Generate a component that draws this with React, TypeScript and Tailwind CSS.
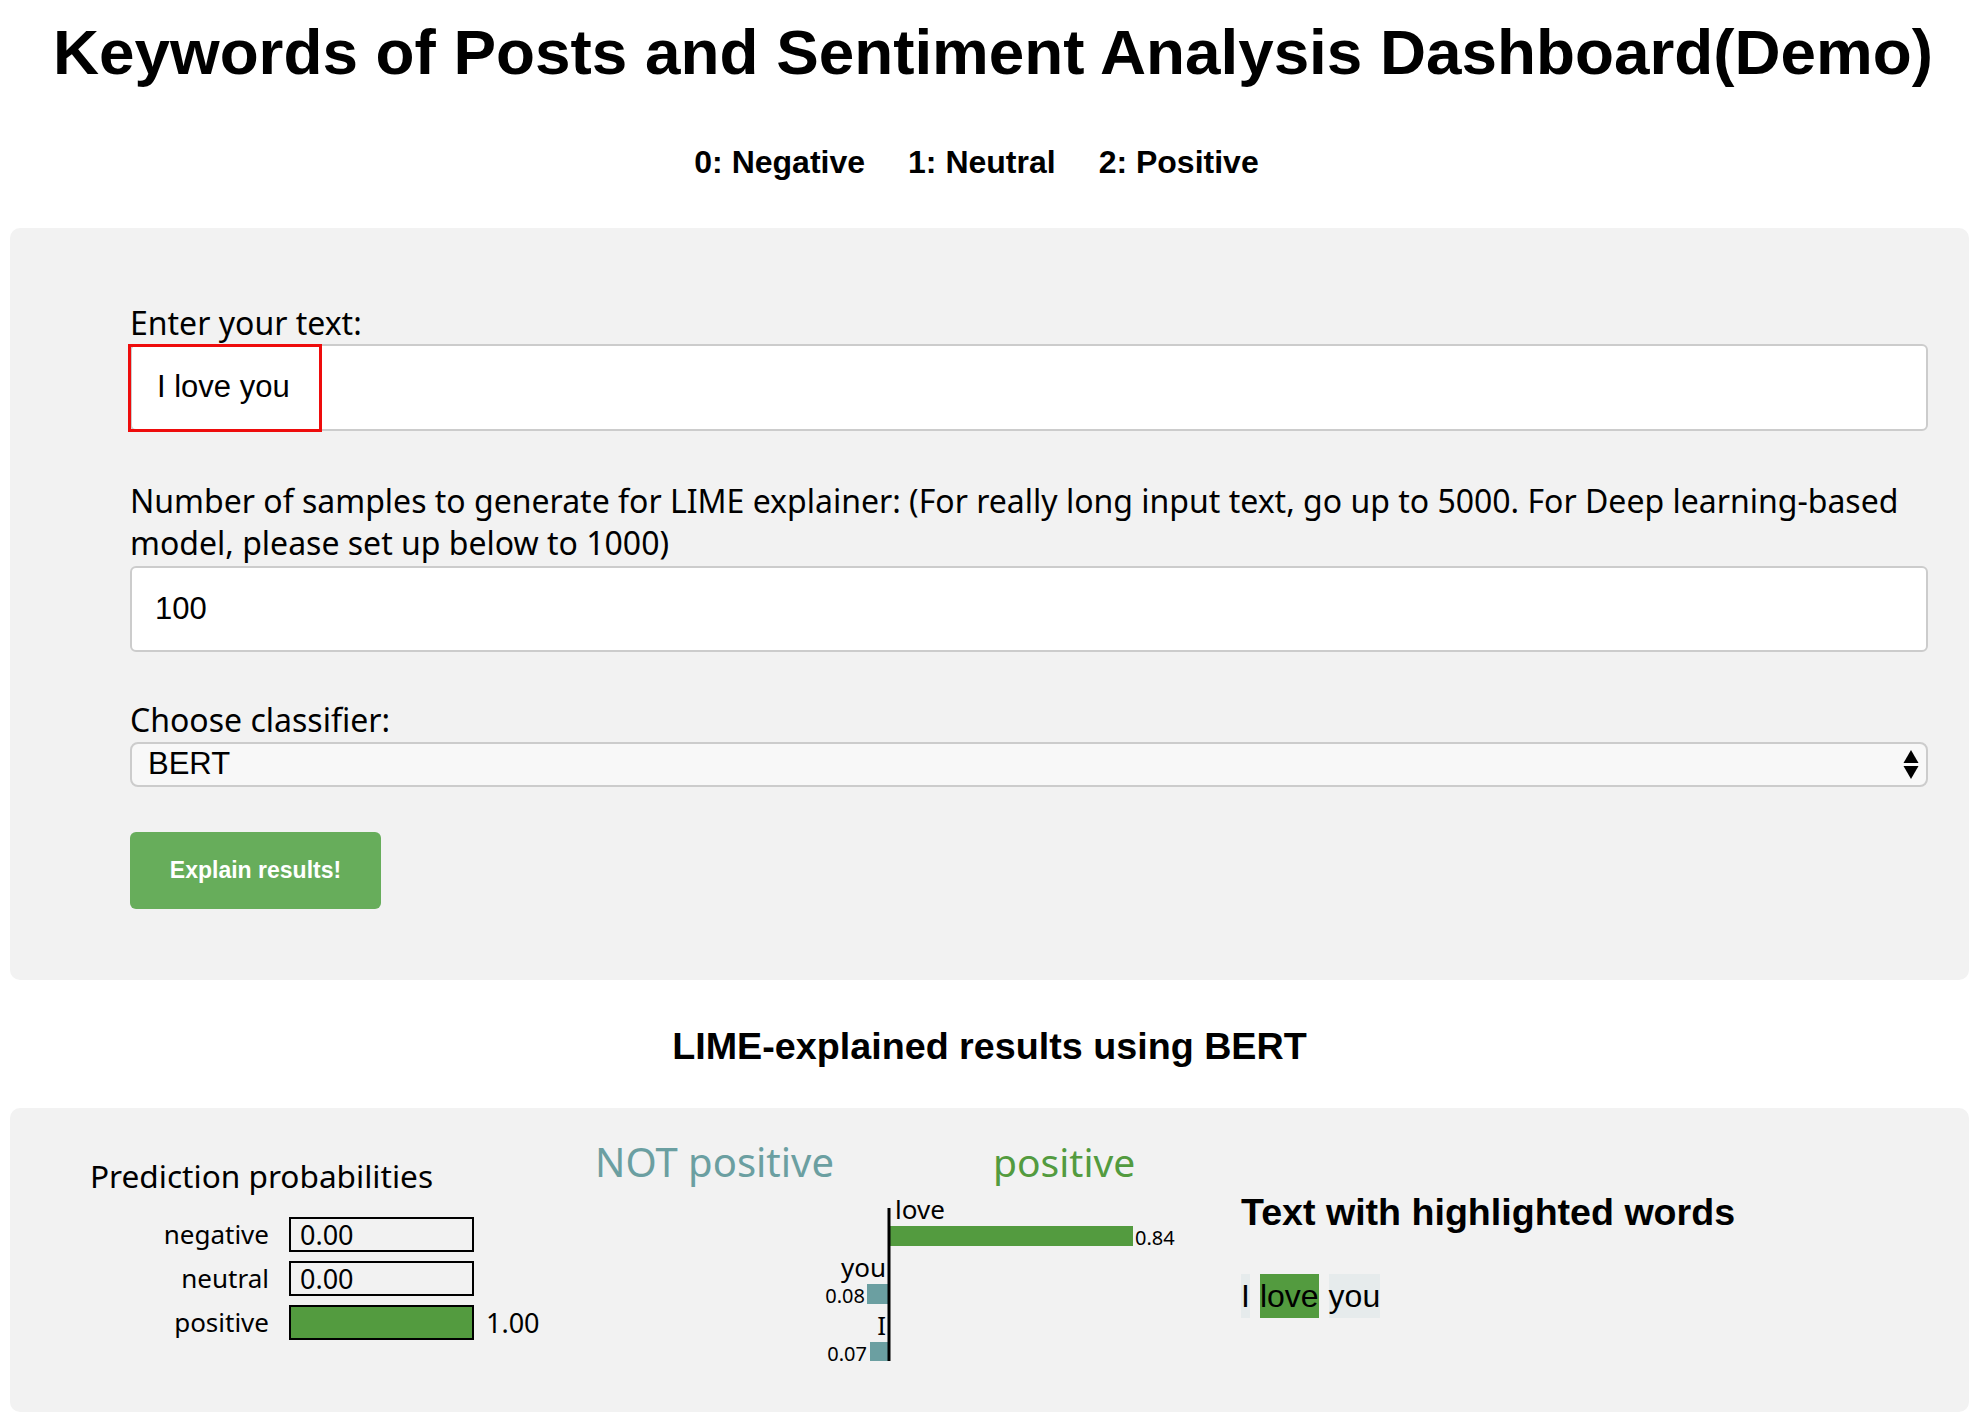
import React from 'react'

const GREEN = '#539b3f'
const TEAL = '#6b9fa1'

function SelectArrows() {
  return (
    <svg width="16" height="29" viewBox="0 0 16 29" className="shrink-0">
      <path d="M8 0 L15.5 13 H0.5 Z" fill="#000" />
      <path d="M0.5 16 H15.5 L8 29 Z" fill="#000" />
    </svg>
  )
}

function ProbRow({ label, value, filled }: { label: string; value: string; filled: boolean }) {
  return (
    <div className="flex h-[35px] items-center">
      <span className="w-[199px] pr-[20px] text-right text-[26px] leading-[35px]">{label}</span>
      <div className="relative h-[35px] w-[185px] border-2 border-black">
        {filled ? (
          <div className="absolute inset-0 bg-[#539b3f]" />
        ) : (
          <span className="absolute left-[9px] top-0 text-[27px] leading-[31px]">{value}</span>
        )}
      </div>
      {filled && <span className="ml-[12px] text-[27px] leading-[35px]">{value}</span>}
    </div>
  )
}

function FeatureChart() {
  const font = { fontFamily: "'Noto Sans', sans-serif" }
  return (
    <svg width="640" height="260" viewBox="0 0 640 260" className="shrink-0" style={font}>
      <text x="35" y="55" fontSize="40" fill={TEAL}>NOT positive</text>
      <text x="433" y="55" fontSize="39" fill={GREEN}>positive</text>

      <text x="335" y="97" fontSize="26" fill="#000">love</text>
      <rect x="330" y="104" width="243" height="20" fill={GREEN} />
      <text x="575" y="123" fontSize="20" fill="#000">0.84</text>

      <text x="326" y="155" fontSize="26" fill="#000" textAnchor="end">you</text>
      <rect x="307" y="162" width="22" height="20" fill={TEAL} />
      <text x="305" y="181" fontSize="20" fill="#000" textAnchor="end">0.08</text>

      <text x="326" y="213" fontSize="26" fill="#000" textAnchor="end">I</text>
      <rect x="310" y="220" width="19" height="19" fill={TEAL} />
      <text x="307" y="239" fontSize="20" fill="#000" textAnchor="end">0.07</text>

      <line x1="329" y1="86" x2="329" y2="239" stroke="#000" strokeWidth="3" />
    </svg>
  )
}

export default function App() {
  return (
    <div className="min-h-screen bg-white text-black font-['Noto_Sans',sans-serif]">
      <h1 className="pt-[14px] text-center font-['Liberation_Sans',Arial,sans-serif] text-[63.8px] font-bold leading-[76px]">
        Keywords of Posts and Sentiment Analysis Dashboard(Demo)
      </h1>

      <div className="mt-[53px] flex justify-center gap-[43px] pr-[33px] font-['Liberation_Sans',Arial,sans-serif] text-[32px] font-bold leading-[38px]">
        <span>0: Negative</span>
        <span>1: Neutral</span>
        <span>2: Positive</span>
      </div>

      {/* Input form */}
      <div className="ml-[10px] mr-[17px] mt-[47px] rounded-[10px] bg-[#f2f2f2] pb-[71px] pl-[120px] pr-[41px] pt-[74px]">
        <label className="block text-[32px] leading-[41px]">Enter your text:</label>
        <div className="relative mt-[1px]">
          <div className="flex h-[87px] items-center rounded-md border-2 border-[#cccccc] bg-white pl-[25px] font-['Liberation_Sans',Arial,sans-serif] text-[31px]">
            I love you
          </div>
          <div className="absolute left-[-2px] top-0 h-[88px] w-[194px] border-[3px] border-[#ee0c0c]" />
        </div>

        <label className="mt-[49px] block text-[32px] leading-[42px]">
          Number of samples to generate for LIME explainer: (For really long input text, go up to 5000. For Deep learning‑based model, please set up below to 1000)
        </label>
        <div className="mt-[2px] flex h-[86px] items-center rounded-md border-2 border-[#cccccc] bg-white pl-[23px] font-['Liberation_Sans',Arial,sans-serif] text-[31px]">
          100
        </div>

        <label className="mt-[47px] block text-[32px] leading-[41px]">Choose classifier:</label>
        <div className="mt-[2px] flex h-[45px] items-center justify-between rounded-lg border-2 border-[#cccccc] bg-[#f8f8f8] pl-[16px] pr-[7px] font-['Liberation_Sans',Arial,sans-serif] text-[31px]">
          <span>BERT</span>
          <SelectArrows />
        </div>

        <button className="mt-[45px] flex h-[77px] w-[251px] items-center justify-center rounded-md bg-[#67ad5b] font-['Liberation_Sans',Arial,sans-serif] text-[23px] font-bold text-white">
          Explain results!
        </button>
      </div>

      <h3 className="mt-[44px] pr-[7px] text-center font-['Liberation_Sans',Arial,sans-serif] text-[37.7px] font-bold leading-[44px]">
        LIME‑explained results using BERT
      </h3>

      {/* LIME output */}
      <div className="ml-[10px] mr-[17px] mt-[40px] flex h-[304px] items-start rounded-[10px] bg-[#f2f2f2]">
        <div className="w-[550px] shrink-0 pl-[80px] pt-[50px]">
          <div className="text-[31.6px] leading-[36px]">Prediction probabilities</div>
          <div className="mt-[23px] flex flex-col gap-[9px]">
            <ProbRow label="negative" value="0.00" filled={false} />
            <ProbRow label="neutral" value="0.00" filled={false} />
            <ProbRow label="positive" value="1.00" filled={true} />
          </div>
        </div>

        <div className="mt-[14px]">
          <FeatureChart />
        </div>

        <div className="ml-[41px] pt-[82px] font-['Liberation_Sans',Arial,sans-serif]">
          <div className="text-[37.6px] font-bold leading-[44px]">Text with highlighted words</div>
          <div className="mt-[40px] flex gap-[10px] text-[32px] leading-[44px]">
            <span className="bg-[#e6ebec]">I</span>
            <span className="bg-[#539b3f]">love</span>
            <span className="bg-[#e6ebec]">you</span>
          </div>
        </div>
      </div>
    </div>
  )
}
